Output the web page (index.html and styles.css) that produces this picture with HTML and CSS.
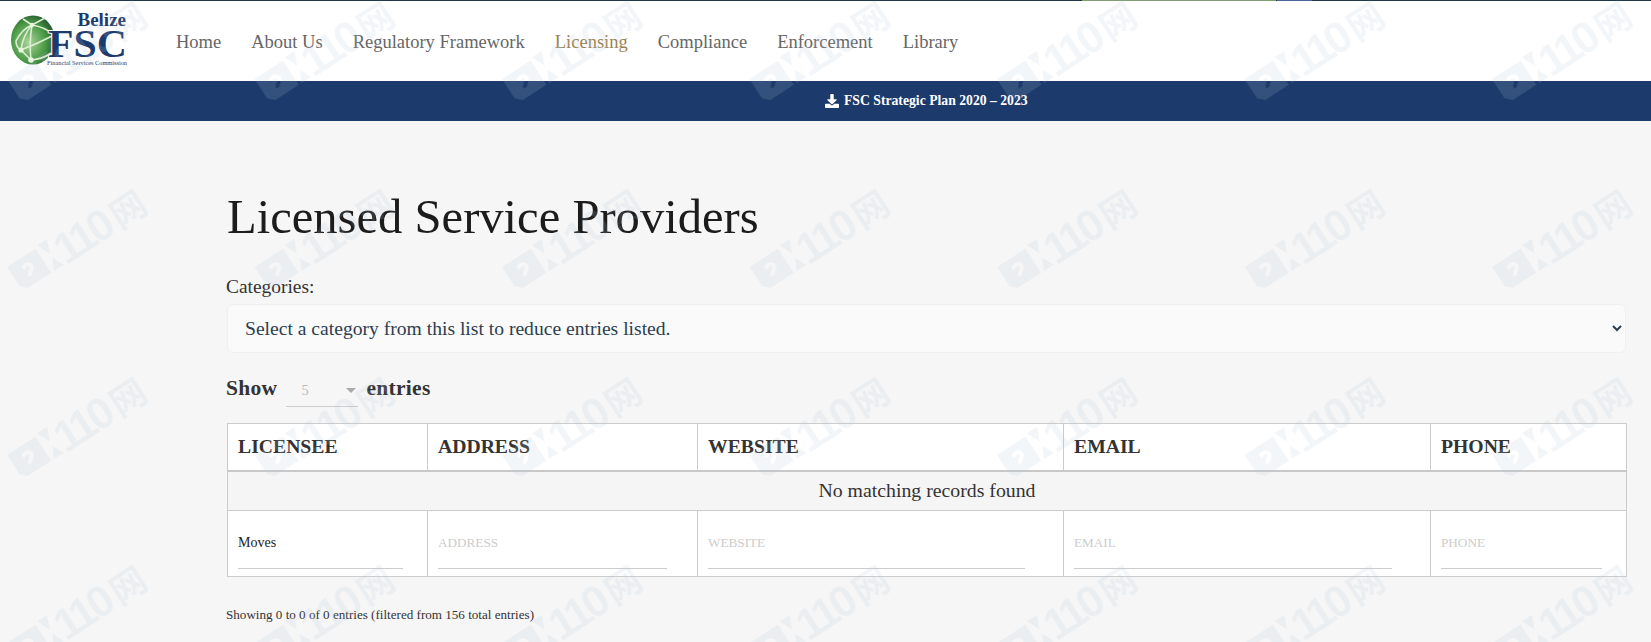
FILE: index.html
```html
<!DOCTYPE html>
<html lang="en">
<head>
<meta charset="utf-8">
<title>Licensed Service Providers</title>
<link rel="stylesheet" href="styles.css">
</head>
<body>
<div class="page">
  <div class="topline"><span class="seg-green"></span><span class="seg-blue"></span></div>
  <header class="header">
    <a class="logo" href="#">
      <svg class="logo-svg" width="120" height="64" viewBox="0 -4 120 64">
        <defs>
          <radialGradient id="globe" cx="40%" cy="55%" r="70%">
            <stop offset="0" stop-color="#a9d49a"/>
            <stop offset=".55" stop-color="#4a9a45"/>
            <stop offset="1" stop-color="#1c3f2a"/>
          </radialGradient>
        </defs>
        <ellipse cx="24" cy="27" rx="22" ry="24.500" fill="url(#globe)"/>
        <g stroke="#dcefd2" stroke-width="1.600" fill="none">
          <path d="M12 37 Q14 22 23 12 Q36 14 45 22"/>
          <path d="M12 37 L22 47 Q34 46 42 40"/>
          <path d="M23 12 Q13 16 7 28 Q7 34 12 37"/>
          <path d="M12 37 Q30 30 45 22"/>
          <path d="M23 12 Q20 30 22 47"/>
          <path d="M14 6 L23 12 L36 5"/>
        </g>
        <g fill="#e8f4e0"><circle cx="23" cy="12" r="2.200"/><circle cx="12" cy="37" r="2.600"/><circle cx="22" cy="47" r="2.800"/></g>
        <text class="logo-belize" x="117" y="13" text-anchor="end">Belize</text>
        <text class="logo-fsc" x="39" y="44" textLength="79" lengthAdjust="spacingAndGlyphs">FSC</text>
        <text class="logo-sub" x="38" y="52" textLength="80" lengthAdjust="spacingAndGlyphs">Financial Services Commission</text>
      </svg>
    </a>
    <nav class="nav">
      <a class="nav-item" href="#">Home</a>
      <a class="nav-item" href="#">About Us</a>
      <a class="nav-item" href="#">Regulatory Framework</a>
      <a class="nav-item nav-active" href="#">Licensing</a>
      <a class="nav-item" href="#">Compliance</a>
      <a class="nav-item" href="#">Enforcement</a>
      <a class="nav-item" href="#">Library</a>
    </nav>
  </header>
  <div class="banner">
    <a class="banner-link" href="#">
      <svg class="banner-icon" width="14" height="14" viewBox="0 0 512 512"><path fill="#fff" d="M216 0h80c13.300 0 24 10.700 24 24v168h87.700c17.800 0 26.700 21.500 14.100 34.100L269.700 378.300c-7.500 7.500-19.800 7.500-27.300 0L90.100 226.100c-12.600-12.600-3.700-34.100 14.100-34.100H192V24c0-13.300 10.700-24 24-24zm296 376v112c0 13.300-10.700 24-24 24H24c-13.300 0-24-10.700-24-24V376c0-13.300 10.700-24 24-24h146.700l49 49c20.100 20.100 52.500 20.100 72.600 0l49-49H488c13.300 0 24 10.700 24 24z"/></svg>
      <span>FSC Strategic Plan 2020 – 2023</span>
    </a>
  </div>
  <main class="main">
    <h1 class="title">Licensed Service Providers</h1>
    <label class="cat-label" for="cat">Categories:</label>
    <select class="cat-select" id="cat">
      <option>Select a category from this list to reduce entries listed.</option>
    </select>
    <div class="show-row">
      <span>Show</span>
      <span class="len-select"><span class="len-value">5</span><span class="len-caret"></span></span>
      <span>entries</span>
    </div>
    <table class="table">
      <colgroup>
        <col class="col-a"><col class="col-b"><col class="col-c"><col class="col-d"><col class="col-e">
      </colgroup>
      <thead>
        <tr>
          <th>LICENSEE</th><th>ADDRESS</th><th>WEBSITE</th><th>EMAIL</th><th>PHONE</th>
        </tr>
      </thead>
      <tbody>
        <tr><td class="empty" colspan="5">No matching records found</td></tr>
      </tbody>
      <tfoot>
        <tr>
          <td><input class="filter filter-set" value="Moves"></td>
          <td><input class="filter" placeholder="ADDRESS"></td>
          <td><input class="filter" placeholder="WEBSITE"></td>
          <td><input class="filter" placeholder="EMAIL"></td>
          <td><input class="filter" placeholder="PHONE"></td>
        </tr>
      </tfoot>
    </table>
    <p class="info">Showing 0 to 0 of 0 entries (filtered from 156 total entries)</p>
  </main>
  <svg class="watermark" width="1651" height="642" aria-hidden="true">
    <defs>
      <pattern id="wm" patternUnits="userSpaceOnUse" x="0" y="-18" width="247.500" height="188">
        <g transform="translate(7 97) rotate(-33)" fill="#b4c6d8">
          <path fill-rule="evenodd" d="M0 0H34V29H6L0 23ZM12 8C17 5 23 7 23 12C23 16 19 17 17 20H13C14 15 19 14 19 12C19 10 15 10 13 12Z"/>
          <path d="M37 -2L49 -2L43 12ZM37 29L43 17L49 29Z"/>
          <text class="wm-text" x="50" y="31">110<tspan class="wm-cjk" dx="6">网</tspan></text>
        </g>
      </pattern>
    </defs>
    <rect class="wm-fill" width="1651" height="642" fill="url(#wm)"/>
  </svg>
</div>
</body>
</html>
```
FILE: styles.css
```css
* { box-sizing: border-box; }
html, body { margin: 0; height: 100%; }
body {
  background: #f6f6f6;
  font-family: "Liberation Serif", serif;
  color: #333;
  overflow: hidden;
}
a { text-decoration: none; color: inherit; }
.page { position: relative; height: 642px; overflow: hidden; }

.topline { display: flex; height: 1px; padding-left: 1082px; background: #22384a; }
.seg-green { width: 194px; background: #7f9e72; }
.seg-blue { width: 35px; margin-left: 1px; background: #4a6796; }

.header {
  display: flex;
  align-items: center;
  height: 80px;
  background: #fff;
  padding-left: 9px;
}
.logo { display: block; width: 167px; height: 64px; margin-top: -1px; }
.logo-svg { display: block; }
.logo-belize { font: bold 19px "Liberation Serif", serif; fill: #1c3a6b; }
.logo-fsc { font: bold 41px "Liberation Serif", serif; fill: #1c3a6b; stroke: #fff; stroke-width: 2px; paint-order: stroke; }
.logo-sub { font: 6px "Liberation Serif", serif; fill: #1c3a6b; }

.nav { display: flex; gap: 30px; padding-top: 2px; }
.nav-item { font-size: 18.500px; color: #666; }
.nav-active { color: #9a8250; }

.banner {
  display: flex;
  align-items: center;
  height: 40px;
  padding-left: 825px;
  background: #1c3a6b;
}
.banner-link { display: flex; align-items: center; gap: 5px; color: #fff; font-size: 13.700px; font-weight: bold; }
.banner-icon { display: block; }

.main { padding: 66px 25px 0 227px; }
.title {
  margin: 0;
  font-size: 48.600px;
  font-weight: 400;
  line-height: 60px;
  color: #1c1c1c;
}
.cat-label { display: block; margin-top: 28px; margin-left: -1px; font-size: 19.400px; line-height: 24px; color: #333; }
.cat-select {
  display: block;
  width: 100%;
  height: 49px;
  margin-top: 5px;
  padding: 0 13px;
  border: 1px solid #f0f0f0;
  border-radius: 6px;
  background-color: #fafafa;
  font-family: "Liberation Serif", serif;
  font-size: 19.600px;
  color: #2c3e50;
}
.show-row {
  display: flex;
  align-items: center;
  height: 36px;
  margin-top: 17px;
  margin-left: -1px;
  font-size: 21.500px;
  font-weight: bold;
  letter-spacing: .3px;
  color: #333;
}
.len-select {
  display: flex;
  align-items: center;
  justify-content: space-between;
  width: 72px;
  height: 36px;
  margin: 2px 8px 0 9px;
  padding: 4px 2px 0 15px;
  border-bottom: 1px solid #ccc;
  font-size: 14.500px;
  font-weight: normal;
  color: #bbb;
}
.len-caret {
  width: 0;
  height: 0;
  border-left: 5px solid transparent;
  border-right: 5px solid transparent;
  border-top: 5px solid #aaa;
}

.table {
  width: 1399px;
  margin-top: 17px;
  border-collapse: collapse;
  table-layout: fixed;
  border: 1px solid #ccc;
}
.col-a { width: 200px; }
.col-b { width: 270px; }
.col-c { width: 366px; }
.col-d { width: 367px; }
.col-e { width: 196px; }
th {
  height: 47px;
  padding: 0 10px;
  background: #fff;
  border-left: 1px solid #ccc;
  border-bottom: 2px solid #c8c8c8;
  text-align: left;
  font-size: 19.700px;
  font-weight: bold;
  color: #333;
}
.empty {
  height: 40px;
  padding: 0;
  text-align: center;
  font-size: 19.800px;
  color: #333;
  background: #f5f5f5;
}
tfoot td {
  height: 66px;
  padding: 0 10px;
  background: #fff;
  border-left: 1px solid #ccc;
  border-top: 1px solid #ccc;
  vertical-align: top;
}
.filter {
  display: block;
  width: 92%;
  height: 58px;
  padding: 6px 0 0;
  border: 0;
  border-bottom: 1px solid #ccc;
  background: transparent;
  outline: 0;
  font-family: "Liberation Serif", serif;
  font-size: 14px;
}
.filter::placeholder { color: #ccc; opacity: 1; font-size: 13.200px; }
.filter-set { color: #222; }
.info { margin: 29px 0 0 -1px; font-size: 13.100px; line-height: 18px; color: #333; }

.watermark { position: absolute; left: 0; top: 0; pointer-events: none; }
.wm-fill { opacity: .16; }
.wm-text { font: bold 44px "Liberation Sans", "Noto Sans CJK SC", sans-serif; letter-spacing: -4px; }
.wm-cjk { font-size: 36px; }
```
